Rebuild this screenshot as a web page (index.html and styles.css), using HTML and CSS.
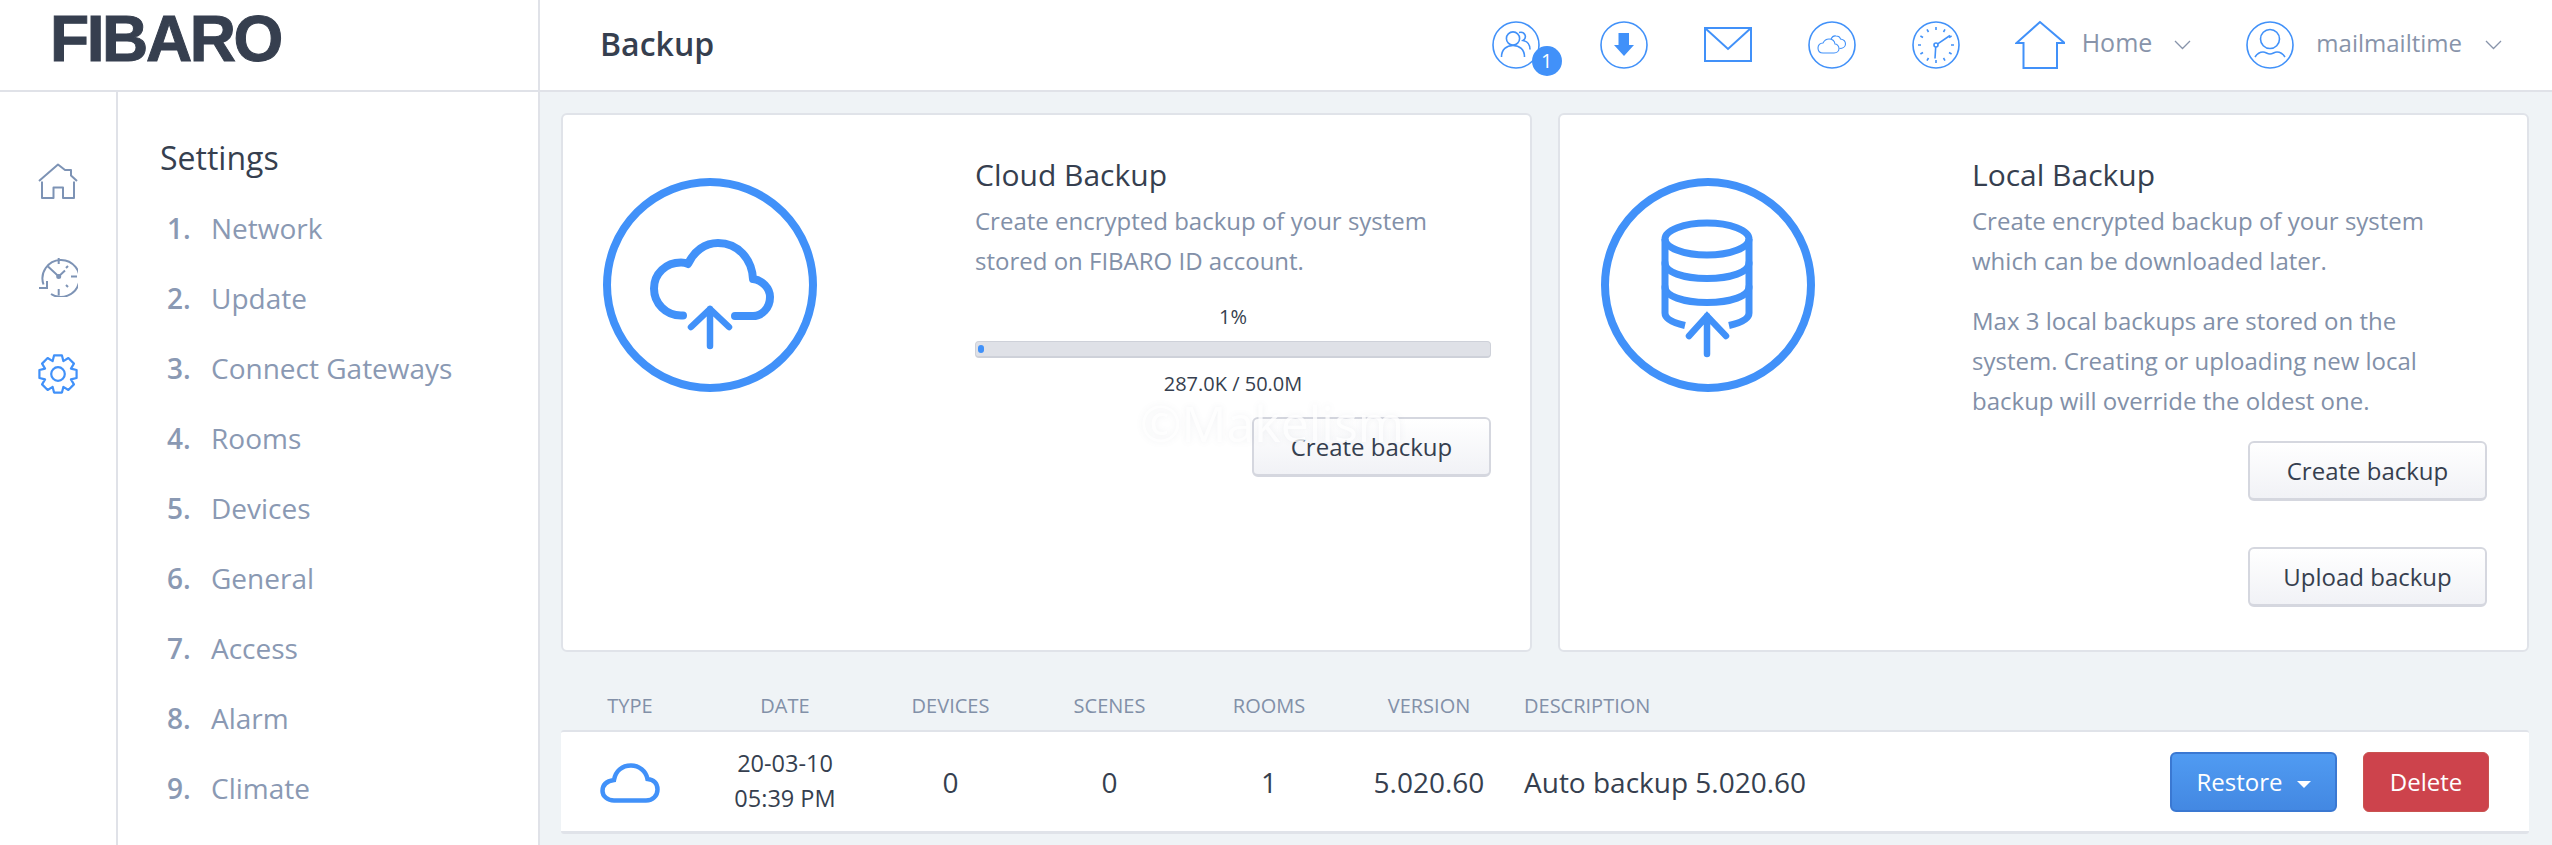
FILE: index.html
```html
<!DOCTYPE html>
<html lang="en">
<head>
<meta charset="utf-8">
<title>Backup</title>
<link rel="stylesheet" href="styles.css">
</head>
<body>
<header class="topbar">
  <div class="logo-cell"><span class="logo">FIBARO</span></div>
  <div class="top-main">
    <h1 class="page-title">Backup</h1>
    <div class="top-icons">
      <span class="top-icon users">
        <svg width="48" height="48" viewBox="0 0 48 48" fill="none" stroke="#4191f9" stroke-width="1.6"><circle cx="24" cy="24" r="23"/><circle cx="21" cy="17.500" r="6.600"/><path d="M9.500 36c0-7.500 5-11.500 11.500-11.500S32.500 28.500 32.500 36"/><path d="M27 11.500c6-1.500 8.500 5 4 8 5 1 7 5 7 9"/></svg>
        <span class="badge">1</span>
      </span>
      <span class="top-icon dl">
        <svg width="48" height="48" viewBox="0 0 48 48" fill="none" stroke="#4191f9" stroke-width="1.6"><circle cx="24" cy="24" r="23"/><path fill="#4191f9" stroke="none" d="M18.500 12H29v12h5L24 35 14 24h4.500z"/></svg>
      </span>
      <span class="top-icon mail">
        <svg width="48" height="36" viewBox="0 0 48 36" fill="none" stroke="#4191f9" stroke-width="2"><rect x="1" y="1" width="46" height="33"/><path d="M1 1l23 21L47 1"/></svg>
      </span>
      <span class="top-icon cloud">
        <svg width="48" height="48" viewBox="0 0 48 48" fill="none" stroke="#4191f9" stroke-width="1.100"><circle cx="24" cy="24" r="23" stroke-width="1.600"/><path d="M15 32h11c3 0 5-2 5-4.500s-2-4.500-4-4.500c-.5-3-3-5-6-5-3 0-5 2-6 4-3 0-5 2-5 5s2 5 5 5z"/><path d="M23 18c1-2 3-3.500 5-3 2 0 4 1 4.500 3 3 .5 5 2 5 5 0 3-3 4.500-6 4.500"/></svg>
      </span>
      <span class="top-icon clock">
        <svg width="48" height="48" viewBox="0 0 48 48" fill="none" stroke="#4191f9" stroke-width="1.600"><circle cx="24" cy="24" r="23"/><circle cx="24" cy="24" r="2"/><path d="M23.700 26l-.7 11.500M25.700 22.800L38 14.500"/><path d="M24 6v3M33 8.400l-1.500 2.600M39.600 15L37 16.500M42 24h-3M39.600 33L37 31.500M33 39.600L31.500 37M24 42v-3M15 39.600l1.500-2.600M8.400 33l2.600-1.500M6 24h3M8.400 15l2.600 1.500M15 8.400l1.500 2.600"/></svg>
      </span>
      <span class="top-menu home-menu">
        <svg width="50" height="50" viewBox="0 0 50 50" fill="none" stroke="#4191f9" stroke-width="2"><path d="M25 2L1.500 23H8.500v25h33.500V23h7.500z"/></svg>
        <span class="menu-label">Home</span>
        <svg width="17" height="10" viewBox="0 0 17 10" fill="none" stroke="#8894aa" stroke-width="1.300"><path d="M1 1l7.500 7.500L16 1"/></svg>
      </span>
      <span class="top-menu user-menu">
        <svg width="48" height="48" viewBox="0 0 48 48" fill="none" stroke="#4191f9" stroke-width="1.600"><circle cx="24" cy="24" r="23"/><circle cx="24" cy="18" r="9.500"/><path d="M9 36c2-3 5-5 8-5 3 0 4 2 7 2s4-2 7-2c3 0 6 2 8 5"/></svg>
        <span class="menu-label">mailmailtime</span>
        <svg width="17" height="10" viewBox="0 0 17 10" fill="none" stroke="#8894aa" stroke-width="1.300"><path d="M1 1l7.500 7.500L16 1"/></svg>
      </span>
    </div>
  </div>
</header>
<div class="body-row">
  <nav class="rail">
    <svg width="40" height="37" viewBox="0 0 40 37" fill="none" stroke="#7d93b5" stroke-width="2" stroke-linejoin="round"><path d="M1 18L20 1.500l7 5.500h6v5.500l6 5.500"/><path d="M4 18.500V35h11.500V24.500h9.500V35H36V18.500"/></svg>
    <svg width="40" height="40" viewBox="0 0 40 40" fill="none" stroke="#7d93b5" stroke-width="2"><path d="M5.500 27.500A18.500 18.500 0 1 1 13 37"/><path d="M1 31h8v-7"/><path d="M20.700 1v6M20.700 32v6.500M39 19.500h-6M30 9l-2 2M30 30l-2-2M10 9.500l10.700 10L27 13.500"/><circle cx="20.700" cy="19.500" r="1.500" fill="#7d93b5"/></svg>
    <svg width="40" height="40" viewBox="0 0 40 40" fill="none" stroke="#4191f9" stroke-width="2.200" stroke-linejoin="round"><circle cx="20" cy="20" r="6.800"/><path d="M16.050 1.410H23.950L25.360 7.070 30.350 4.060 35.940 9.650 32.930 14.640 38.590 16.050V23.950L32.930 25.360 35.940 30.350 30.350 35.940 25.360 32.930 23.950 38.590H16.050L14.640 32.930 9.650 35.940 4.060 30.350 7.070 25.360 1.410 23.950V16.050L7.070 14.640 4.060 9.650 9.650 4.060 14.640 7.070z"/></svg>
  </nav>
  <aside class="subnav">
    <h2 class="subnav-title">Settings</h2>
    <ol class="subnav-list">
      <li><b>1.</b><span>Network</span></li>
      <li><b>2.</b><span>Update</span></li>
      <li><b>3.</b><span>Connect Gateways</span></li>
      <li><b>4.</b><span>Rooms</span></li>
      <li><b>5.</b><span>Devices</span></li>
      <li><b>6.</b><span>General</span></li>
      <li><b>7.</b><span>Access</span></li>
      <li><b>8.</b><span>Alarm</span></li>
      <li><b>9.</b><span>Climate</span></li>
    </ol>
  </aside>
  <main class="content">
    <div class="cards">
      <section class="card">
        <svg class="card-icon" width="214" height="214" viewBox="0 0 214 214" fill="none" stroke="#4191f9" stroke-width="8" stroke-linecap="round" stroke-linejoin="round"><circle cx="107" cy="107" r="103"/><path d="M80 137.500H78c-15 0-27-12-27-27s12-26 27-26c3 0 5 .5 7 1.500 6-13 17-21 30-21 20 0 34 16 35 36 9 1 17 9 17 18 0 11-8 19-17 19h-18"/><path d="M107 168V131M88 149l19-18 19 18" stroke-width="6.500"/></svg>
        <div class="card-body">
          <h3 class="card-title">Cloud Backup</h3>
          <p class="card-text">Create encrypted backup of your system<br>stored on FIBARO ID account.</p>
          <div class="progress-label">1%</div>
          <div class="progress"><div class="progress-fill"></div></div>
          <div class="progress-label sub">287.0K / 50.0M</div>
          <div class="card-actions one"><button class="btn">Create backup</button></div>
        </div>
        <span class="watermark">©Makelism</span>
      </section>
      <section class="card local">
        <svg class="card-icon" width="214" height="214" viewBox="0 0 214 214" fill="none" stroke="#4191f9" stroke-width="7" stroke-linecap="round"><circle cx="107" cy="107" r="103" stroke-width="8"/><ellipse cx="106" cy="61" rx="42" ry="16"/><path d="M64 61v74c0 6 9 10 20 12.500M148 61v74c0 6-9 10-20 12.500" stroke-linecap="butt"/><path d="M64 85c0 9 18 15.500 42 15.500S148 94 148 85M64 109c0 9 18 15.500 42 15.500s42-6.500 42-15.500"/><path d="M106 176v-38M88 158l18-20 19 20" stroke-width="6.500"/></svg>
        <div class="card-body">
          <h3 class="card-title">Local Backup</h3>
          <p class="card-text">Create encrypted backup of your system<br>which can be downloaded later.</p>
          <p class="card-text gap">Max 3 local backups are stored on the<br>system. Creating or uploading new local<br>backup will override the oldest one.</p>
          <div class="card-actions two"><button class="btn">Create backup</button><button class="btn">Upload backup</button></div>
        </div>
      </section>
    </div>
    <div class="table-head grid-cols">
      <span>TYPE</span><span>DATE</span><span>DEVICES</span><span>SCENES</span><span>ROOMS</span><span>VERSION</span><span class="left">DESCRIPTION</span>
    </div>
    <div class="table-row grid-cols">
      <span class="cell type"><svg width="60" height="40" viewBox="0 0 60 40" fill="none" stroke="#4191f9" stroke-width="4.500"><path d="M14 37.500h32c7 0 11.500-5 11.500-11 0-6-4-10-10-10.500C46 8 39 2.500 31 2.500 22 2.500 15.500 8 14 17 7 18 2.500 21 2.500 28c0 5 5 9.500 11.500 9.500z"/></svg></span>
      <span class="cell date">20-03-10<br>05:39 PM</span>
      <span class="cell num">0</span>
      <span class="cell num">0</span>
      <span class="cell num">1</span>
      <span class="cell num">5.020.60</span>
      <span class="cell desc">Auto backup 5.020.60</span>
      <span class="cell actions"><button class="btn-primary">Restore<i class="caret"></i></button><button class="btn-danger">Delete</button></span>
    </div>
  </main>
</div>
</body>
</html>
```
FILE: styles.css
```css
* { box-sizing: border-box; }
html, body { margin: 0; height: 100%; overflow: hidden; }
body { width: 2552px; height: 845px; background: #fff; font-family: "Open Sans", sans-serif; color: #363f4f; display: flex; flex-direction: column; }

.topbar { height: 92px; display: flex; border-bottom: 2px solid #e0e2e8; background: #fff; flex: none; }
.logo-cell { width: 540px; border-right: 2px solid #e0e2e8; padding-left: 50px; display: flex; align-items: center; }
.logo { font-family: "Liberation Sans", sans-serif; font-weight: 700; font-size: 64px; letter-spacing: -2.4px; color: #363f4f; line-height: 1; margin-top: -12px; -webkit-text-stroke: 1px #363f4f; }
.top-main { flex: 1; display: flex; align-items: center; justify-content: space-between; padding-left: 60px; }
.page-title { margin: 0 0 3px; font-size: 32px; font-weight: 600; }
.top-icons { display: flex; align-items: center; height: 50px; padding-right: 50px; }
.top-icon { display: flex; position: relative; margin-right: 56px; }
.top-icon.users { margin-right: 60px; }
.top-icon.clock { margin-right: 55px; }
.badge { position: absolute; left: 40px; top: 25px; width: 30px; height: 30px; border-radius: 50%; background: #4191f9; color: #fff; font-size: 20px; text-align: center; line-height: 30px; }
.top-menu { display: flex; align-items: center; color: #8894aa; font-size: 25px; }
.home-menu { margin-right: 55px; }
.menu-label { margin: -6px 22px 0 17px; }
.user-menu .menu-label { font-size: 24px; margin-left: 22px; margin-right: 23px; }

.body-row { flex: 1; display: flex; min-height: 0; }
.rail { width: 118px; border-right: 2px solid #e0e2e8; display: flex; flex-direction: column; align-items: center; padding: 71px 0 0 0; gap: 57px; flex: none; }
.subnav { width: 422px; border-right: 2px solid #e0e2e8; padding: 46px 0 0 43px; flex: none; }
.subnav-title { margin: 0 0 15px -1px; font-size: 32px; font-weight: 400; line-height: 40px; }
.subnav-list { list-style: none; margin: 0; padding: 0; }
.subnav-list li { height: 70px; display: flex; align-items: center; color: #8a99b3; font-size: 28px; padding-left: 6px; }
.subnav-list b { width: 44px; font-weight: 600; }

.content { flex: 1; background: #eff3f6; padding: 21px 23px 0 21px; min-width: 0; }
.cards { display: grid; grid-template-columns: 971px 971px; gap: 26px; height: 539px; }
.card { position: relative; background: #fff; border: 2px solid #e0e3e9; border-radius: 6px; display: flex; padding: 62px 0 0 40px; }
.card.local { padding-left: 41px; }
.card.local .card-icon { margin-right: 157px; }
.card-icon { flex: none; margin-right: 158px; margin-top: 1px; }
.card-body { width: 516px; margin-top: -23px; }
.card-title { margin: 0; font-size: 30px; font-weight: 400; line-height: 42px; }
.card-text { margin: 5px 0 0; font-size: 24px; line-height: 40px; color: #8290a8; white-space: nowrap; }
.card-text.gap { margin-top: 20px; }
.progress-label { text-align: center; font-size: 20px; line-height: 28px; margin-top: 22px; }
.progress-label.sub { margin-top: 12px; }
.progress { height: 17px; margin-top: 10px; background: #dfe1e7; border: 1px solid #ced1d9; border-bottom-width: 2px; border-radius: 4px; padding: 3px 2px; }
.progress-fill { width: 6px; height: 8px; background: #4191f9; border-radius: 3px; }
.card-actions { display: flex; flex-direction: column; align-items: flex-end; }
.card-actions.one { margin-top: 19px; }
.card-actions.two { margin-top: 20px; gap: 46px; margin-right: 1px; }
.btn { width: 239px; height: 60px; background: linear-gradient(#fff, #f1f2f6); border: 2px solid #d5d7df; border-bottom-width: 3px; border-radius: 6px; font: 400 24px "Open Sans", sans-serif; color: #363f4f; padding: 0; }
.watermark { position: absolute; left: 577px; top: 296px; font-size: 50px; line-height: 24px; color: rgba(255,255,255,.8); text-shadow: 0 0 6px rgba(120,130,150,.1); pointer-events: none; }

.grid-cols { display: grid; grid-template-columns: 138px 172px 159px 159px 160px 160px 1fr auto; }
.table-head { height: 78px; padding-top: 28px; align-items: center; text-align: center; color: #8290a8; font-size: 20px; }
.table-head .left { text-align: left; padding-left: 15px; }
.table-row { height: 104px; background: #fff; border: 2px solid #e0e3e9; border-width: 2px 0 3px; border-radius: 3px; align-items: center; text-align: center; font-size: 28px; }
.cell.type { display: flex; justify-content: center; margin-top: 2px; }
.cell.date { font-size: 23.5px; line-height: 35px; margin-top: -2px; }
.cell.desc { text-align: left; padding-left: 15px; }
.cell.actions { display: flex; gap: 26px; padding-right: 40px; }
.btn-primary, .btn-danger { height: 60px; border-radius: 6px; font: 400 24px "Open Sans", sans-serif; color: #fff; padding: 0; }
.btn-primary { width: 167px; background: linear-gradient(#509bf2, #4388e2); border: 2px solid #3a78d2; }
.btn-danger { width: 126px; background: #cd434c; border: 1px solid #c9534f; }
.caret { display: inline-block; margin-left: 14px; vertical-align: 3px; border: 7px solid transparent; border-top-color: #fff; border-bottom-width: 0; }
```
